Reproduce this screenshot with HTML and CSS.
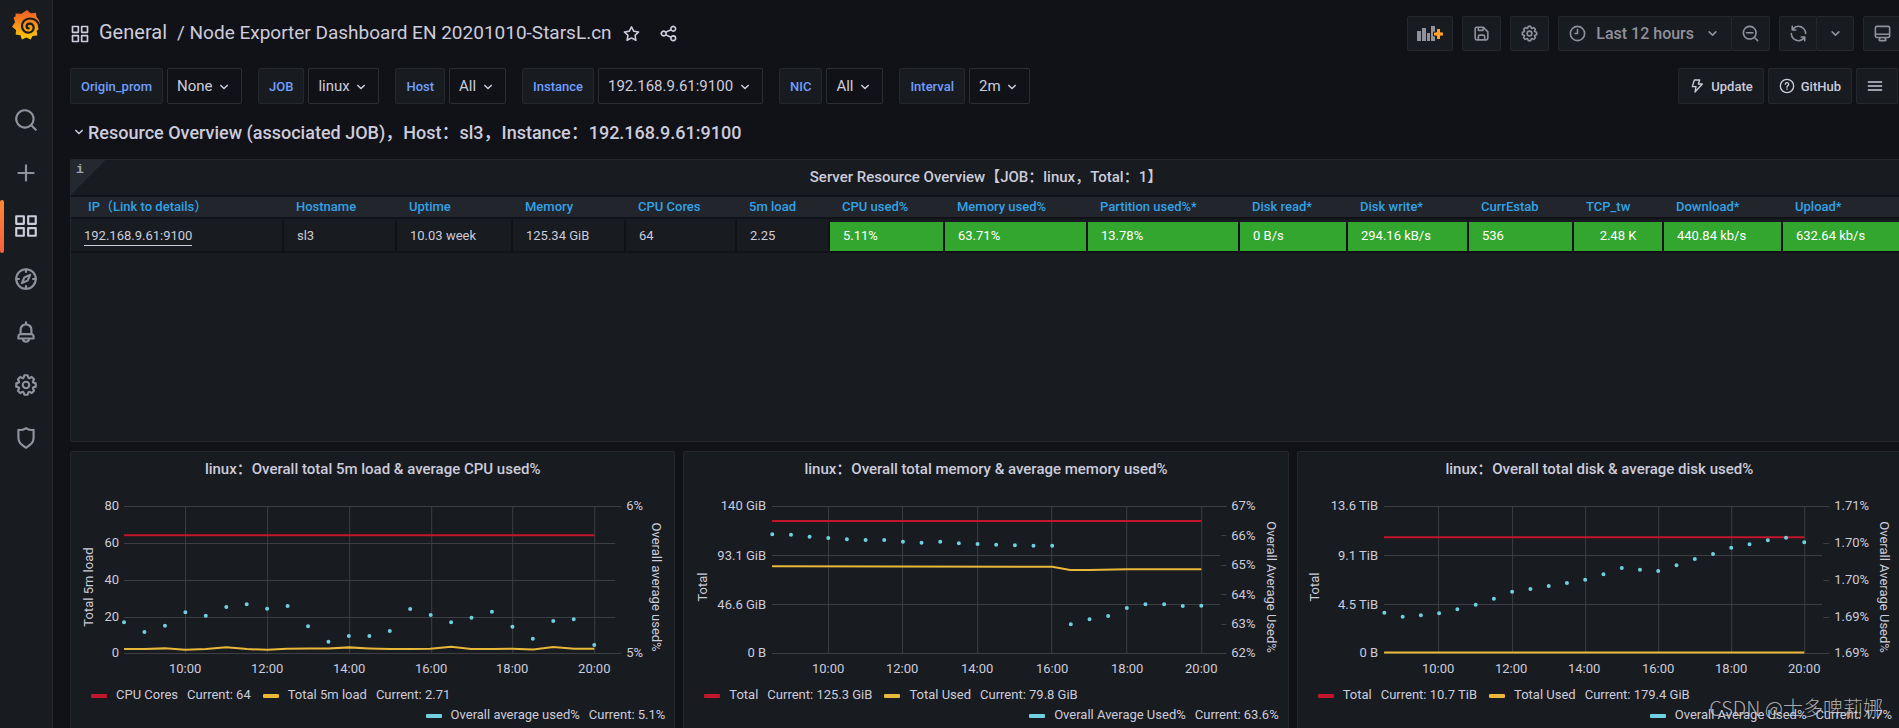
FILE: index.html
```
<!DOCTYPE html>
<html lang="zh-CN">
<head>
  <meta charset="UTF-8" />
  <meta name="viewport" content="width=device-width, initial-scale=1.0"/>
  <title>Node Exporter Dashboard EN 20201010-StarsL.cn - Grafana</title>
  <link rel="stylesheet" href="styles.css">
</head>
<body>
  <!-- shared icons -->
  <svg class="icon-defs" aria-hidden="true">
    <symbol id="i-apps" viewBox="0 0 24 24"><path d="M10,13H3a1,1,0,0,0-1,1v7a1,1,0,0,0,1,1h7a1,1,0,0,0,1-1V14A1,1,0,0,0,10,13ZM9,20H4V15H9ZM21,2H14a1,1,0,0,0-1,1v7a1,1,0,0,0,1,1h7a1,1,0,0,0,1-1V3A1,1,0,0,0,21,2ZM20,9H15V4h5Zm1,4H14a1,1,0,0,0-1,1v7a1,1,0,0,0,1,1h7a1,1,0,0,0,1-1V14A1,1,0,0,0,21,13Zm-1,7H15V15h5ZM10,2H3A1,1,0,0,0,2,3v7a1,1,0,0,0,1,1h7a1,1,0,0,0,1-1V3A1,1,0,0,0,10,2ZM9,9H4V4H9Z"/></symbol>
    <symbol id="i-down" viewBox="0 0 24 24"><path d="M17,9.17a1,1,0,0,0-1.41,0L12,12.71,8.46,9.17a1,1,0,0,0-1.41,0,1,1,0,0,0,0,1.42l4.24,4.24a1,1,0,0,0,1.42,0L17,10.59A1,1,0,0,0,17,9.17Z"/></symbol>
    <symbol id="i-cog" viewBox="0 0 24 24"><path d="M21.32,9.55l-1.89-.63.89-1.78A1,1,0,0,0,20.13,6L18,3.87a1,1,0,0,0-1.15-.19l-1.78.89-.63-1.89A1,1,0,0,0,13.5,2h-3a1,1,0,0,0-.95.68L8.92,4.57,7.14,3.68A1,1,0,0,0,6,3.87L3.87,6a1,1,0,0,0-.19,1.15l.89,1.78-1.89.63A1,1,0,0,0,2,10.5v3a1,1,0,0,0,.68.95l1.89.63-.89,1.78A1,1,0,0,0,3.87,18L6,20.13a1,1,0,0,0,1.15.19l1.78-.89.63,1.89a1,1,0,0,0,.95.68h3a1,1,0,0,0,.95-.68l.63-1.89,1.78.89A1,1,0,0,0,18,20.13L20.13,18a1,1,0,0,0,.19-1.15l-.89-1.78,1.89-.63A1,1,0,0,0,22,13.5v-3A1,1,0,0,0,21.32,9.55ZM20,12.78l-1.2.4A2,2,0,0,0,17.64,16l.57,1.14-1.1,1.1L16,17.64a2,2,0,0,0-2.79,1.16l-.4,1.2H11.22l-.4-1.2A2,2,0,0,0,8,17.64l-1.14.57-1.1-1.1L6.36,16A2,2,0,0,0,5.2,13.18L4,12.78V11.22l1.2-.4A2,2,0,0,0,6.36,8L5.79,6.89l1.1-1.1L8,6.36A2,2,0,0,0,10.82,5.2l.4-1.2h1.56l.4,1.2A2,2,0,0,0,16,6.36l1.14-.57,1.1,1.1L17.64,8a2,2,0,0,0,1.16,2.79l1.2.4ZM12,8a4,4,0,1,0,4,4A4,4,0,0,0,12,8Zm0,6a2,2,0,1,1,2-2A2,2,0,0,1,12,14Z"/></symbol>
  </svg>

  <nav class="sidebar">
    <a href="#" class="logo" aria-label="Home">
      <svg viewBox="0 0 28 30">
        <defs>
          <linearGradient id="flame" x1="0" y1="0" x2="0" y2="1">
            <stop offset="0" stop-color="#f05a28"/>
            <stop offset="1" stop-color="#fbca0a"/>
          </linearGradient>
        </defs>
        <path fill="url(#flame)" d="M15 0l3.500 3.200 5.500-.4.600 4.400c2 1.600 3.200 4.300 3.200 7.300l-1.600.8.300 4.200-1.800 1.200.6 4.800-4.800.4-1.800 3.600-4.500-2-4.300 2-1.400-4.200-4.900-.7.500-4.600L0 16.800l3-4.600-1.400-4.700 1.900-1.100L3.600 3.500l5.800.2z"/>
        <path fill="none" stroke="#181b1f" stroke-width="2.200" stroke-linecap="round" d="M27.500 17c-1-5.500-5-8.500-9.500-8.500-5 0-8 3.700-8 7.700 0 3.700 2.800 6.500 6.200 6.500 3.100 0 5.500-2.300 5.500-5 0-2.400-1.800-4.100-4-4.100-1.800 0-3.100 1.200-3.100 2.700 0 1.200.8 2.100 2 2.100"/>
      </svg>
    </a>
    <a href="#" class="nav-item" aria-label="Search"><svg viewBox="0 0 24 24"><path d="M21.710,20.290,18,16.610A9,9,0,1,0,16.610,18l3.680,3.680a1,1,0,0,0,1.420,0A1,1,0,0,0,21.710,20.290ZM11,18a7,7,0,1,1,7-7A7,7,0,0,1,11,18Z"/></svg></a>
    <a href="#" class="nav-item" aria-label="Create"><svg viewBox="0 0 24 24"><path d="M19,11H13V5a1,1,0,0,0-2,0v6H5a1,1,0,0,0,0,2h6v6a1,1,0,0,0,2,0V13h6a1,1,0,0,0,0-2Z"/></svg></a>
    <a href="#" class="nav-item active" aria-label="Dashboards"><svg><use href="#i-apps"/></svg></a>
    <a href="#" class="nav-item" aria-label="Explore"><svg viewBox="0 0 24 24" class="line"><circle cx="12" cy="12" r="9"/><path d="M12 3v2.500M12 18.500V21M3 12h2.500M18.500 12H21M15.800 8.200l-2.300 5.300-5.300 2.300 2.300-5.300z"/></svg></a>
    <a href="#" class="nav-item" aria-label="Alerting"><svg viewBox="0 0 24 24"><path d="M18,13.180V10a6,6,0,0,0-5-5.910V3a1,1,0,0,0-2,0V4.090A6,6,0,0,0,6,10v3.180A3,3,0,0,0,4,16v2a1,1,0,0,0,1,1H8.140a4,4,0,0,0,7.720,0H19a1,1,0,0,0,1-1V16A3,3,0,0,0,18,13.180ZM8,10a4,4,0,0,1,8,0v3H8Zm4,10a2,2,0,0,1-1.720-1h3.440A2,2,0,0,1,12,20Zm6-3H6V16a1,1,0,0,1,1-1H17a1,1,0,0,1,1,1Z"/></svg></a>
    <a href="#" class="nav-item" aria-label="Configuration"><svg><use href="#i-cog"/></svg></a>
    <a href="#" class="nav-item" aria-label="Server Admin"><svg viewBox="0 0 24 24"><path d="M19.630,3.650a1,1,0,0,0-.84-.2,8,8,0,0,1-6.220-1.270,1,1,0,0,0-1.140,0A8,8,0,0,1,5.210,3.450a1,1,0,0,0-.84.2A1,1,0,0,0,4,4.430v7.450a9,9,0,0,0,3.770,7.330l3.650,2.600a1,1,0,0,0,1.160,0l3.650-2.600A9,9,0,0,0,20,11.880V4.430A1,1,0,0,0,19.630,3.650ZM18,11.880a7,7,0,0,1-2.930,5.700L12,19.770,8.930,17.580A7,7,0,0,1,6,11.880V5.580a10,10,0,0,0,6-1.390,10,10,0,0,0,6,1.390Z"/></svg></a>
  </nav>

  <main class="main">
    <header class="toolbar">
      <svg class="title-icon"><use href="#i-apps"/></svg>
      <h1><a href="#">General</a> <a href="#" class="dash-name">/ Node Exporter Dashboard EN 20201010-StarsL.cn</a></h1>
      <button class="plain" aria-label="Star"><svg viewBox="0 0 24 24"><path d="M22,9.670A1,1,0,0,0,21.140,9l-5.690-.83L12.900,3a1,1,0,0,0-1.800,0L8.550,8.160,2.860,9a1,1,0,0,0-.81.680,1,1,0,0,0,.25,1l4.130,4-1,5.680A1,1,0,0,0,6.900,21.440L12,18.770l5.100,2.670a.93.93,0,0,0,.46.12,1,1,0,0,0,.59-.19,1,1,0,0,0,.4-1l-1-5.680,4.130-4A1,1,0,0,0,22,9.670Zm-6.150,4a1,1,0,0,0-.29.880l.72,4.200-3.760-2a1.060,1.060,0,0,0-.94,0l-3.760,2,.72-4.200a1,1,0,0,0-.29-.88l-3-3,4.210-.61a1,1,0,0,0,.76-.55L12,5.700l1.880,3.820a1,1,0,0,0,.76.550l4.210.61Z"/></svg></button>
      <button class="plain share" aria-label="Share"><svg viewBox="0 0 24 24"><path d="M18,14a4,4,0,0,0-3.080,1.480l-5.100-2.350a3.640,3.640,0,0,0,0-2.260l5.100-2.350A4,4,0,1,0,14,6a4.170,4.170,0,0,0,.07.710L8.790,9.140a4,4,0,1,0,0,5.720l5.280,2.430A4.170,4.170,0,0,0,14,18a4,4,0,1,0,4-4ZM18,4a2,2,0,1,1-2,2A2,2,0,0,1,18,4ZM6,14a2,2,0,1,1,2-2A2,2,0,0,1,6,14Zm12,6a2,2,0,1,1,2-2A2,2,0,0,1,18,20Z"/></svg></button>

      <div class="actions">
        <button class="btn add-panel" aria-label="Add panel">
          <svg viewBox="0 0 26 15">
            <path d="M0 5h4v10H0zM5 2h4v13H5zM10 7h3v8h-3zM14 0h4v15h-4z"/>
            <path fill="#ff9f2e" stroke="#181b1f" d="M19.500 2.500h4v3.500h3v4h-3v3.500h-4V10h-3V6h3z"/>
          </svg>
        </button>
        <button class="btn" aria-label="Save"><svg viewBox="0 0 24 24"><path d="M20.710,9.290l-6-6a1,1,0,0,0-.32-.21A1.090,1.090,0,0,0,14,3H6A3,3,0,0,0,3,6V18a3,3,0,0,0,3,3H18a3,3,0,0,0,3-3V10A1,1,0,0,0,20.710,9.290ZM9,5h4V7H9Zm6,14H9V16a1,1,0,0,1,1-1h4a1,1,0,0,1,1,1Zm4-1a1,1,0,0,1-1,1H17V16a3,3,0,0,0-3-3H10a3,3,0,0,0-3,3v3H6a1,1,0,0,1-1-1V6A1,1,0,0,1,6,5H7V8A1,1,0,0,0,8,9h6a1,1,0,0,0,1-1V6.410l4,4Z"/></svg></button>
        <button class="btn" aria-label="Settings"><svg><use href="#i-cog"/></svg></button>
        <div class="btn-group">
          <button class="btn time">
            <svg viewBox="0 0 24 24" class="line"><circle cx="12" cy="12" r="9"/><path d="M12 7v5H9"/></svg>
            <span>Last 12 hours</span>
            <svg><use href="#i-down"/></svg>
          </button>
          <button class="btn" aria-label="Zoom out"><svg viewBox="0 0 24 24"><path d="M21.710,20.290,18,16.610A9,9,0,1,0,16.610,18l3.680,3.680a1,1,0,0,0,1.420,0A1,1,0,0,0,21.710,20.290ZM11,18a7,7,0,1,1,7-7A7,7,0,0,1,11,18Zm4-8H7a1,1,0,0,0,0,2h8a1,1,0,0,0,0-2Z"/></svg></button>
        </div>
        <div class="btn-group refresh">
          <button class="btn" aria-label="Refresh"><svg viewBox="0 0 24 24"><path d="M19.910,15.510H15.380a1,1,0,0,0,0,2h2.400A8,8,0,0,1,4,12a1,1,0,0,0-2,0,10,10,0,0,0,16.880,7.230V21a1,1,0,0,0,2,0V16.500A1,1,0,0,0,19.910,15.510ZM12,2A10,10,0,0,0,5.120,4.770V3a1,1,0,0,0-2,0V7.500a1,1,0,0,0,1,1h4.500a1,1,0,0,0,0-2H6.220A8,8,0,0,1,20,12a1,1,0,0,0,2,0A10,10,0,0,0,12,2Z"/></svg></button>
          <button class="btn" aria-label="Refresh interval"><svg><use href="#i-down"/></svg></button>
        </div>
        <button class="btn" aria-label="Cycle view mode"><svg viewBox="0 0 24 24"><path d="M19,2H5A3,3,0,0,0,2,5V15a3,3,0,0,0,3,3H7.640l-.58,1a2,2,0,0,0,0,2,2,2,0,0,0,1.750,1h6.460A2,2,0,0,0,17,21a2,2,0,0,0,0-2l-.59-1H19a3,3,0,0,0,3-3V5A3,3,0,0,0,19,2ZM8.770,20,10,18H14l1.200,2ZM20,15a1,1,0,0,1-1,1H5a1,1,0,0,1-1-1V14H20Zm0-3H4V5A1,1,0,0,1,5,4H19a1,1,0,0,1,1,1Z"/></svg></button>
      </div>
    </header>

    <div class="submenu">
      <div class="variable">
        <label for="origin">Origin_prom</label>
        <div class="select"><select id="origin"><option>None</option></select><svg><use href="#i-down"/></svg></div>
      </div>
      <div class="variable">
        <label for="job">JOB</label>
        <div class="select"><select id="job"><option>linux</option></select><svg><use href="#i-down"/></svg></div>
      </div>
      <div class="variable">
        <label for="host">Host</label>
        <div class="select"><select id="host"><option>All</option></select><svg><use href="#i-down"/></svg></div>
      </div>
      <div class="variable">
        <label for="instance">Instance</label>
        <div class="select"><select id="instance"><option>192.168.9.61:9100</option></select><svg><use href="#i-down"/></svg></div>
      </div>
      <div class="variable">
        <label for="nic">NIC</label>
        <div class="select"><select id="nic"><option>All</option></select><svg><use href="#i-down"/></svg></div>
      </div>
      <div class="variable">
        <label for="interval">Interval</label>
        <div class="select"><select id="interval"><option>2m</option></select><svg><use href="#i-down"/></svg></div>
      </div>
      <div class="links">
        <a href="#" class="link-btn"><svg viewBox="0 0 24 24" class="line"><path d="M8 3h8l-2 6h6L9 21l1.500-8H5z"/></svg>Update</a>
        <a href="#" class="link-btn"><svg viewBox="0 0 24 24" class="line"><circle cx="12" cy="12" r="10"/><path d="M9.500 9.500a2.500 2.500 0 1 1 3.500 2.300c-.7.300-1 .7-1 1.500v.4M12 16.500v.5"/></svg>GitHub</a>
        <button class="link-btn menu" aria-label="Dashboards"><svg viewBox="0 0 24 24" class="line"><path d="M2 6h20M2 12h20M2 18h20"/></svg></button>
      </div>
    </div>

    <h2 class="row-title"><svg><use href="#i-down"/></svg>Resource Overview (associated JOB)，Host：sl3，Instance：192.168.9.61:9100</h2>

    <section class="panel overview">
      <span class="info">i</span>
      <h3>Server Resource Overview【JOB：linux，Total：1】</h3>
      <table>
        <colgroup>
          <col class="c-ip"><col class="c-host"><col class="c-up"><col class="c-mem"><col class="c-cores">
          <col class="c-load"><col class="c-cpu"><col class="c-memused"><col class="c-part"><col class="c-read">
          <col class="c-write"><col class="c-estab"><col class="c-tw"><col class="c-down"><col class="c-upl">
        </colgroup>
        <thead>
          <tr>
            <th class="ip">IP（Link to details）</th><th>Hostname</th><th>Uptime</th><th>Memory</th><th>CPU Cores</th>
            <th>5m load</th><th>CPU used%</th><th>Memory used%</th><th>Partition used%*</th><th>Disk read*</th>
            <th>Disk write*</th><th>CurrEstab</th><th>TCP_tw</th><th>Download*</th><th>Upload*</th>
          </tr>
        </thead>
        <tbody>
          <tr>
            <td><a href="#">192.168.9.61:9100</a></td><td>sl3</td><td>10.03 week</td><td>125.34 GiB</td><td>64</td>
            <td>2.25</td><td class="ok">5.11%</td><td class="ok">63.71%</td><td class="ok">13.78%</td><td class="ok">0 B/s</td>
            <td class="ok">294.16 kB/s</td><td class="ok">536</td><td class="ok center">2.48 K</td><td class="ok">440.84 kb/s</td><td class="ok">632.64 kb/s</td>
          </tr>
        </tbody>
      </table>
    </section>

    <div class="graphs">
      <section class="panel">
        <h3>linux：Overall total 5m load &amp; average CPU used%</h3>
        <svg class="chart" viewBox="0 0 603 194">
          <path class="grid" d="M53 16.500H550M53 53.500H544M53 90.500H544M53 127.500H544M53 163.500H550M114.500 16V163M196.500 16V163M278.500 16V163M360.500 16V163M441.500 16V163M523.500 16V163"/>
          <g class="left-axis"><text x="48" y="20">80</text><text x="48" y="57">60</text><text x="48" y="94">40</text><text x="48" y="131">20</text><text x="48" y="167">0</text></g>
          <g><text x="555" y="20">6%</text><text x="555" y="167">5%</text></g>
          <g class="time-axis"><text x="114" y="183">10:00</text><text x="196" y="183">12:00</text><text x="278" y="183">14:00</text><text x="360" y="183">16:00</text><text x="441" y="183">18:00</text><text x="523" y="183">20:00</text></g>
          <g class="axis-name"><text transform="translate(22 97) rotate(-90)">Total 5m load</text><text transform="translate(581 97) rotate(90)">Overall average used%</text></g>
          <path class="red" d="M53 45.300H523"/>
          <polyline class="yellow" points="53,159 73,159 94,158.300 114,159.700 135,159 155,157.300 176,159 196,159.700 216,158.700 237,158.500 257,158.300 278,157.300 298,158.300 319,159 339,159 359,158.700 380,156.700 400,159 421,159 441,158.700 462,159.500 482,157 503,158.700 523,158.700"/>
          <path class="dots" d="M53 132.300h0M73.400 142h0M93.900 135.700h0M114.300 122.300h0M134.700 125.700h0M155.200 117h0M175.600 114.300h0M196 118.700h0M216.500 116h0M236.900 136.300h0M257.300 151.700h0M277.700 146h0M298.200 146h0M318.600 141h0M339 119h0M359.500 125h0M379.900 132.300h0M400.300 127.700h0M420.700 121.700h0M441.200 136.700h0M461.600 148.700h0M482 131h0M502.500 129.300h0M523 155h0"/>
        </svg>
        <ul class="legend">
          <li><i class="sw-red"></i>CPU Cores<span>Current: 64</span></li>
          <li><i class="sw-yellow"></i>Total 5m load<span>Current: 2.71</span></li>
          <li class="right"><i class="sw-cyan"></i>Overall average used%<span>Current: 5.1%</span></li>
        </ul>
      </section>

      <section class="panel">
        <h3>linux：Overall total memory &amp; average memory used%</h3>
        <svg class="chart" viewBox="0 0 603 194">
          <path class="grid" d="M88 16.500H542M88 65.500H536M88 114.500H536M88 163.500H542M537 45.500h5M537 75.500h5M537 104.500h5M537 134.500h5M144.500 16V163M218.500 16V163M293.500 16V163M367.500 16V163M442.500 16V163M517.500 16V163"/>
          <g class="left-axis"><text x="82" y="20">140 GiB</text><text x="82" y="70">93.1 GiB</text><text x="82" y="119">46.6 GiB</text><text x="82" y="167">0 B</text></g>
          <g><text x="547" y="20">67%</text><text x="547" y="50">66%</text><text x="547" y="79">65%</text><text x="547" y="109">64%</text><text x="547" y="138">63%</text><text x="547" y="167">62%</text></g>
          <g class="time-axis"><text x="144" y="183">10:00</text><text x="218" y="183">12:00</text><text x="293" y="183">14:00</text><text x="368" y="183">16:00</text><text x="443" y="183">18:00</text><text x="517" y="183">20:00</text></g>
          <g class="axis-name"><text transform="translate(23 97) rotate(-90)">Total</text><text transform="translate(583 97) rotate(90)">Overall Average Used%</text></g>
          <path class="red" d="M88 31H517"/>
          <polyline class="yellow" points="88,76.300 368,76.700 386,80 405,80 443,79.300 517,79.300"/>
          <path class="dots" d="M88.200 44.300h0M106.900 44.700h0M125.500 46.700h0M144.200 48h0M162.800 49.300h0M181.500 50h0M200.100 50h0M218.800 51.700h0M237.400 52.700h0M256.100 51.700h0M274.700 53.300h0M293.400 54h0M312 54.700h0M330.700 55.300h0M349.300 55.700h0M368 55.700h0M386.600 134.300h0M405.300 129.300h0M423.900 126h0M442.600 118h0M461.200 114.300h0M479.900 114.300h0M498.500 116h0M517 115.700h0"/>
        </svg>
        <ul class="legend">
          <li><i class="sw-red"></i>Total<span>Current: 125.3 GiB</span></li>
          <li><i class="sw-yellow"></i>Total Used<span>Current: 79.8 GiB</span></li>
          <li class="right"><i class="sw-cyan"></i>Overall Average Used%<span>Current: 63.6%</span></li>
        </ul>
      </section>

      <section class="panel">
        <h3>linux：Overall total disk &amp; average disk used%</h3>
        <svg class="chart" viewBox="0 0 603 194">
          <path class="grid" d="M86 16.500H531M86 65.500H524M86 114.500H524M86 163.500H531M525 53.500h6M525 90.500h6M525 127.500h6M140.500 16V163M214.500 16V163M287.500 16V163M360.500 16V163M433.500 16V163M506.500 16V163"/>
          <g class="left-axis"><text x="80" y="20">13.6 TiB</text><text x="80" y="70">9.1 TiB</text><text x="80" y="119">4.5 TiB</text><text x="80" y="167">0 B</text></g>
          <g><text x="536" y="20">1.71%</text><text x="536" y="57">1.70%</text><text x="536" y="94">1.70%</text><text x="536" y="131">1.69%</text><text x="536" y="167">1.69%</text></g>
          <g class="time-axis"><text x="140" y="183">10:00</text><text x="213" y="183">12:00</text><text x="286" y="183">14:00</text><text x="360" y="183">16:00</text><text x="433" y="183">18:00</text><text x="506" y="183">20:00</text></g>
          <g class="axis-name"><text transform="translate(21 97) rotate(-90)">Total</text><text transform="translate(582 97) rotate(90)">Overall Average Used%</text></g>
          <path class="red" d="M86 47.300H506"/>
          <path class="yellow" d="M86 162.300H506"/>
          <path class="dots" d="M86.300 122.700h0M104.600 126.700h0M122.800 125.300h0M141 123.300h0M159.300 119.300h0M177.600 114.700h0M195.800 108.700h0M214 101.700h0M232.300 99h0M250.600 96h0M268.800 93h0M287 89.700h0M305.300 84.300h0M323.600 78h0M341.800 79.700h0M360 81h0M378.300 75.300h0M396.600 69h0M414.800 64h0M433 57.700h0M451.300 54.300h0M469.600 50.300h0M487.800 47.700h0M506 52.300h0"/>
        </svg>
        <ul class="legend">
          <li><i class="sw-red"></i>Total<span>Current: 10.7 TiB</span></li>
          <li><i class="sw-yellow"></i>Total Used<span>Current: 179.4 GiB</span></li>
          <li class="right"><i class="sw-cyan"></i>Overall Average Used%<span>Current: 1.7%</span></li>
        </ul>
      </section>
    </div>
  </main>

  <div class="watermark">CSDN @士多啤莉娜</div>
</body>
</html>
```

FILE: styles.css
```
* {
  box-sizing: border-box;
}

body {
  margin: 0;
  height: 100vh;
  display: flex;
  overflow: hidden;
  background-color: #111217;
  color: #ccccdc;
  font-family: Roboto, "Noto Sans CJK SC", sans-serif;
  font-size: 13px;
}

a {
  color: inherit;
  text-decoration: none;
}

button,
select {
  font: inherit;
  color: inherit;
  cursor: pointer;
}

svg {
  fill: currentColor;
  flex: none;
}

.line {
  fill: none;
  stroke: currentColor;
  stroke-width: 2;
  stroke-linecap: round;
  stroke-linejoin: round;
}

.icon-defs {
  position: absolute;
  width: 0;
  height: 0;
}

/* sidebar */
.sidebar {
  width: 53px;
  flex: none;
  background-color: #181b1f;
  border-right: 1px solid #25272c;
  color: #90919d;
}

.logo {
  display: flex;
  justify-content: center;
  padding-top: 10px;
  height: 94px;
}

.logo svg {
  width: 28px;
  height: 30px;
}

.nav-item {
  height: 53px;
  padding-bottom: 2px;
  display: flex;
  align-items: center;
  justify-content: center;
  position: relative;
}

.nav-item svg {
  width: 26px;
  height: 26px;
}

.active {
  color: #ccccdc;
}

.active::before {
  content: "";
  position: absolute;
  left: 0;
  top: 0;
  bottom: 0;
  width: 4px;
  border-radius: 2px;
  background-image: linear-gradient(#ff8833, #f55f3e);
}

/* the dashboard runs slightly past the right edge */
.main {
  flex: 1;
  min-width: 0;
  margin-right: -3px;
  padding-left: 17px;
}

.toolbar {
  display: flex;
  align-items: center;
  padding-top: 16px;
}

.title-icon {
  width: 20px;
  height: 20px;
  margin-right: 9px;
}

.toolbar h1 {
  margin: 0;
  padding-bottom: 3px;
  font-size: 20px;
  font-weight: 400;
  white-space: nowrap;
}

.dash-name {
  margin-left: 5px;
  font-size: 19px;
}

.plain {
  display: flex;
  padding: 0;
  margin-left: 10px;
  border: none;
  background: none;
}

.share {
  margin-left: 18px;
}

.plain svg,
.btn svg {
  width: 19px;
  height: 19px;
}

.actions {
  display: flex;
  gap: 9px;
  margin-left: auto;
}

.btn {
  min-width: 39px;
  height: 35px;
  padding: 0;
  display: flex;
  align-items: center;
  justify-content: center;
  background-color: #181b1f;
  border: 1px solid #25272c;
  border-radius: 2px;
  color: #90919d;
}

.btn.add-panel {
  width: 46px;
}

.add-panel svg {
  width: 26px;
  height: 15px;
}

.btn-group {
  display: flex;
}

.btn-group .btn + .btn {
  margin-left: -1px;
}

.refresh .btn {
  min-width: 38px;
}

.btn.time {
  padding: 0 9px;
  font-size: 16px;
  font-weight: 500;
}

.time span {
  margin: 0 9px;
}

/* variables */
.submenu {
  display: flex;
  gap: 16px;
  padding: 17px 4px 0 0;
}

.variable {
  display: flex;
  gap: 4px;
}

.variable label,
.link-btn {
  height: 36px;
  padding: 0 10px;
  display: flex;
  align-items: center;
  background-color: #181b1f;
  border: 1px solid #25272c;
  border-radius: 2px;
  font-weight: 500;
}

.variable label {
  color: #6e9fff;
}

.select {
  position: relative;
}

.select select {
  appearance: none;
  height: 36px;
  padding: 0 28px 0 9px;
  background-color: #111217;
  border: 1px solid #2c2e34;
  border-radius: 2px;
  font-size: 15px;
}

.select svg {
  position: absolute;
  right: 9px;
  top: 10px;
  width: 18px;
  height: 18px;
  pointer-events: none;
}

.links {
  display: flex;
  gap: 4px;
  margin-left: auto;
}

.link-btn svg {
  width: 16px;
  height: 16px;
  margin-right: 6px;
}

.link-btn.menu {
  width: 42px;
}

/* row heading */
.row-title {
  margin: 0;
  height: 55px;
  padding-bottom: 2px;
  display: flex;
  align-items: center;
  font-size: 18px;
  font-weight: 500;
}

.row-title svg {
  width: 18px;
  height: 18px;
  margin-top: 3px;
}

/* panels */
.panel {
  background-color: #181b1f;
  border: 1px solid #25272c;
  border-radius: 2px;
  position: relative;
}

.panel h3 {
  margin: 0;
  height: 35px;
  line-height: 35px;
  font-size: 15px;
  font-weight: 500;
  text-align: center;
}

.overview {
  height: 283px;
}

.info {
  position: absolute;
  left: 0;
  top: 0;
  width: 35px;
  height: 35px;
  padding: 2px 5px;
  background-image: linear-gradient(135deg, #25282e 50%, transparent 50%);
  font-family: "Liberation Mono", monospace;
  font-weight: 700;
  color: #a0a1ad;
}

table {
  width: 100%;
  table-layout: fixed;
  border-spacing: 0;
}

th {
  height: 24px;
  padding: 0 0 0 12px;
  background-color: #22252b;
  border: solid #111217;
  border-width: 2px 0;
  color: #33a2e5;
  font-weight: 500;
  line-height: 16px;
  text-align: left;
  white-space: nowrap;
}

th.ip {
  padding-left: 17px;
}

td {
  height: 34px;
  padding: 0 0 2px 13px;
  border: solid #111217;
  border-width: 0 2px 2px 0;
  border-top: 3px solid #181b1f;
  white-space: nowrap;
}

td a {
  border-bottom: 1px solid #ccccdc;
  padding-bottom: 2px;
}

.ok {
  background-color: #32a62e;
  color: #ffffff;
}

.center {
  padding-left: 0;
  text-align: center;
}

.c-ip { width: 213px; }
.c-host { width: 113px; }
.c-up { width: 116px; }
.c-mem { width: 113px; }
.c-cores { width: 111px; }
.c-load { width: 93px; }
.c-cpu { width: 115px; }
.c-memused { width: 143px; }
.c-part { width: 152px; }
.c-read { width: 108px; }
.c-write { width: 121px; }
.c-estab { width: 105px; }
.c-tw { width: 90px; }
.c-down { width: 119px; }
.c-upl { width: 118px; }

/* graphs */
.graphs {
  display: grid;
  grid-template-columns: repeat(3, 1fr);
  gap: 8px;
  margin-top: 9px;
}

.graphs .panel {
  min-height: 300px;
}

.chart {
  display: block;
  width: 100%;
  margin-top: 3px;
}

.chart text {
  font-size: 13px;
}

.left-axis {
  text-anchor: end;
}

.time-axis,
.axis-name {
  text-anchor: middle;
}

.grid {
  stroke: #3c3e42;
}

.red,
.yellow {
  fill: none;
  stroke: #c4162a;
  stroke-width: 2;
}

.yellow {
  stroke: #eab839;
}

.dots {
  stroke: #6ed0e0;
  stroke-width: 4;
  stroke-linecap: round;
}

.legend {
  display: flex;
  flex-wrap: wrap;
  margin: 0;
  padding: 1px 9px 0 20px;
  list-style: none;
  line-height: 20px;
}

.legend li {
  display: flex;
  align-items: center;
  margin-right: 12px;
}

.legend .right {
  width: 100%;
  justify-content: flex-end;
  margin: 0;
}

.legend i {
  width: 16px;
  height: 4px;
  margin: 2px 9px 0 0;
  border-radius: 1px;
}

.legend span {
  margin-left: 9px;
}

.sw-red { background-color: #c4162a; }
.sw-yellow { background-color: #eab839; }
.sw-cyan { background-color: #6ed0e0; }

.watermark {
  position: absolute;
  right: 16px;
  bottom: 5px;
  font-family: "Noto Sans CJK SC", sans-serif;
  font-size: 20px;
  font-weight: 300;
  line-height: 30px;
  color: rgba(210, 210, 210, 0.8);
}
```
